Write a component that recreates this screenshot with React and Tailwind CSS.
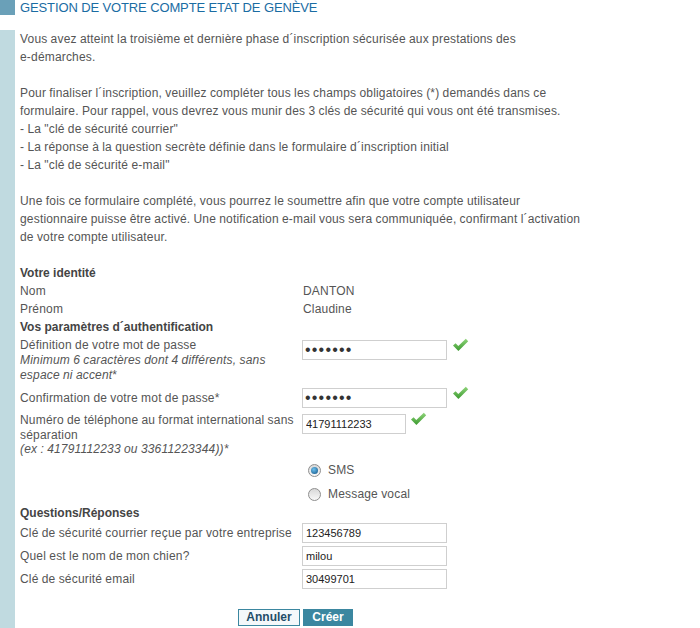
const Check = () => (
  <svg width="17" height="14" viewBox="0 0 17 14" className="shrink-0">
    <defs>
      <linearGradient id="ck" x1="0" y1="0" x2="0" y2="1">
        <stop offset="0" stopColor="#8fd47a" />
        <stop offset="1" stopColor="#3b9a2f" />
      </linearGradient>
    </defs>
    <path d="M1 7.5 L3.6 5.2 L6.3 8 L13.8 0.8 L16.2 3.3 L6.4 13 Z" fill="url(#ck)" />
  </svg>
);

const Radio = ({ checked }) => (
  <span className="w-[13px] h-[13px] rounded-full border border-[#8e8e8e] bg-[linear-gradient(#d8d8d8,#f8f8f8)] flex items-center justify-center shrink-0">
    {checked && (
      <span className="w-[7px] h-[7px] rounded-full bg-[radial-gradient(circle_at_40%_35%,#6cc0ee,#0d4f82)]" />
    )}
  </span>
);

const Field = ({ value, w = "w-[145px]" }) => (
  <input
    type="text"
    defaultValue={value}
    readOnly
    className={`${w} h-[20px] border border-[#cfcfcf] px-[3px] text-[11px] tracking-normal text-[#222] outline-none bg-white`}
  />
);

const Secret = () => (
  <input
    type="password"
    defaultValue="1234567"
    readOnly
    className="w-[145px] h-[20px] border border-[#cfcfcf] px-[2px] text-[16px] tracking-[1.2px] text-[#333] outline-none bg-white"
  />
);

const Row = ({ h, label, bold, children }) => (
  <div className={`flex items-center ${h}`}>
    <div
      className={`w-[282px] shrink-0 ${
        bold ? "font-bold text-[#444] tracking-normal [word-spacing:0px]" : ""
      }`}
    >
      {label}
    </div>
    <div className="flex items-center">{children}</div>
  </div>
);

export default function App() {
  return (
    <div
      className="w-[700px] h-[628px] bg-white overflow-hidden text-[12px] text-[#555]"
      style={{ fontFamily: '"Liberation Sans", Arial, sans-serif' }}
    >
      <div className="flex items-start h-[30px]">
        <div className="w-[15px] h-[15px] bg-[#6aa0b8]" />
        <h1 className="ml-[5px] text-[13px] leading-[16px] tracking-[-0.12px] text-[#1a6ca3] uppercase">
          Gestion de votre compte Etat de Genève
        </h1>
      </div>
      <div className="flex h-[598px]">
        <div className="w-[15px] bg-[#c0dae0] shrink-0" />
        <div className="pl-[5px] leading-[18px] tracking-[0.18px] [word-spacing:-0.3px]">
          <p className="w-[620px] mb-[18px]">
            Vous avez atteint la troisième et dernière phase d´inscription sécurisée aux prestations des
            <br />
            e-démarches.
          </p>
          <p className="w-[620px] mb-[18px]">
            Pour finaliser l´inscription, veuillez compléter tous les champs obligatoires (*) demandés dans ce
            <br />
            formulaire. Pour rappel, vous devrez vous munir des 3 clés de sécurité qui vous ont été transmises.
            <br />
            - La "clé de sécurité courrier"
            <br />
            - La réponse à la question secrète définie dans le formulaire d´inscription initial
            <br />- La "clé de sécurité e-mail"
          </p>
          <p className="w-[620px] mb-[18px]">
            Une fois ce formulaire complété, vous pourrez le soumettre afin que votre compte utilisateur
            <br />
            gestionnaire puisse être activé. Une notification e-mail vous sera communiquée, confirmant l´activation
            <br />
            de votre compte utilisateur.
          </p>

          <Row h="h-[18px]" label="Votre identité" bold />
          <Row h="h-[18px]" label="Nom">
            <span className="pl-[1px]">DANTON</span>
          </Row>
          <Row h="h-[18px]" label="Prénom">
            <span className="pl-[1px]">Claudine</span>
          </Row>
          <Row h="h-[18px]" label="Vos paramètres d´authentification" bold />

          <div className="flex items-start pt-[2px] h-[50px]">
            <div className="w-[282px] shrink-0 leading-[15px]">
              Définition de votre mot de passe
              <br />
              <i>Minimum 6 caractères dont 4 différents, sans</i>
              <br />
              <i>espace ni accent</i>*
            </div>
            <div className="flex items-start gap-[5px] mt-[2px]">
              <Secret />
              <div className="-mt-[2px]">
                <Check />
              </div>
            </div>
          </div>

          <div className="flex items-center h-[24px]">
            <div className="w-[282px] shrink-0">Confirmation de votre mot de passe*</div>
            <div className="flex items-start gap-[5px]">
              <Secret />
              <div className="-mt-[2px]">
                <Check />
              </div>
            </div>
          </div>

          <div className="flex items-start pt-[3px] h-[48px]">
            <div className="w-[282px] shrink-0 leading-[14.5px]">
              Numéro de téléphone au format international sans
              <br />
              séparation
              <br />
              <i>(ex : 41791112233 ou 33611223344))*</i>
            </div>
            <div className="flex items-start gap-[4px] mt-[1px]">
              <Field value="41791112233" w="w-[104px]" />
              <div className="-mt-[2px]">
                <Check />
              </div>
            </div>
          </div>

          <div className="pl-[288px]">
            <label className="flex items-center gap-[7px] h-[22px] mt-[1px]">
              <Radio checked />
              <span>SMS</span>
            </label>
            <label className="flex items-center gap-[7px] h-[22px] mt-[2px]">
              <Radio />
              <span>Message vocal</span>
            </label>
          </div>

          <Row h="h-[16px]" label="Questions/Réponses" bold />
          <Row h="h-[23px]" label="Clé de sécurité courrier reçue par votre entreprise">
            <Field value="123456789" />
          </Row>
          <Row h="h-[23px]" label="Quel est le nom de mon chien?">
            <Field value="milou" />
          </Row>
          <Row h="h-[23px]" label="Clé de sécurité email">
            <Field value="30499701" />
          </Row>

          <div className="flex gap-[3px] pl-[218px] mt-[19px] tracking-normal [word-spacing:0px]">
            <button className="h-[17px] w-[62px] border border-[#3b87a0] bg-[#f4f8fa] text-[#1f4d68] font-bold text-[12px] leading-[15px]">
              Annuler
            </button>
            <button className="h-[17px] w-[50px] bg-[#3b87a0] text-white font-bold text-[12px] leading-[17px]">
              Créer
            </button>
          </div>
        </div>
      </div>
    </div>
  );
}
